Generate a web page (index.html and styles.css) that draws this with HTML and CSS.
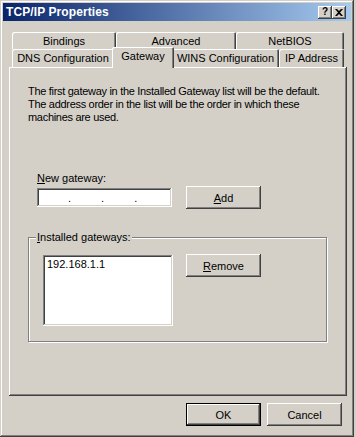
FILE: index.html
```html
<!DOCTYPE html>
<html lang="en">
<head>
    <link rel="stylesheet" href="styles.css">
    <meta charset="UTF-8">
    <title>TCP/IP Properties</title>
</head>
<body>
    <div class="window">
        <div class="titlebar">
            <span class="title">TCP/IP Properties</span>
            <div class="caption-buttons">
                <button class="cap-btn help">?</button>
                <button class="cap-btn close">
                    <svg width="8" height="7" viewBox="0 0 8 7"><path d="M0 0h2l2 2 2-2h2L5 3.5 8 7H6L4 5 2 7H0l3-3.5z" fill="#000"/></svg>
                </button>
            </div>
        </div>

        <div class="content">
            <div class="tabs">
                <div class="tab-row back">
                    <div class="tab t-bindings">Bindings</div>
                    <div class="tab t-advanced">Advanced</div>
                    <div class="tab t-netbios">NetBIOS</div>
                </div>
                <div class="tab-row front">
                    <div class="tab t-dns">DNS Configuration</div>
                    <div class="tab t-gateway selected">Gateway</div>
                    <div class="tab t-wins">WINS Configuration</div>
                    <div class="tab t-ip">IP Address</div>
                </div>
            </div>

            <div class="panel">
                <p class="intro">The first gateway in the Installed Gateway list will be the default. The address order in the list will be the order in which these machines are used.</p>

                <label class="field-label"><u>N</u>ew gateway:</label>
                <div class="input-row">
                    <div class="ip-input">
                        <span class="dot">.</span>
                        <span class="dot">.</span>
                        <span class="dot">.</span>
                    </div>
                    <button class="btn"><u>A</u>dd</button>
                </div>

                <fieldset class="group">
                    <legend><u>I</u>nstalled gateways:</legend>
                    <div class="list-row">
                        <div class="listbox">
                            <div class="item">192.168.1.1</div>
                        </div>
                        <button class="btn"><u>R</u>emove</button>
                    </div>
                </fieldset>
            </div>

            <div class="footer">
                <button class="btn default">OK</button>
                <button class="btn">Cancel</button>
            </div>
        </div>
    </div>
</body>
</html>
```

FILE: styles.css
```css
* {
    margin: 0;
    padding: 0;
    box-sizing: border-box;
    font-family: 'Liberation Sans', Arial, sans-serif;
}

body {
    background: #d4d0c8;
    color: #000;
    font-size: 11px;
}

.window {
    width: 354px;
    height: 437px;
    padding: 3px;
    background: #d4d0c8;
    box-shadow: inset -1px -1px #404040, inset 1px 1px #d4d0c8, inset -2px -2px #808080, inset 2px 2px #fff;
}

.titlebar {
    height: 18px;
    display: flex;
    align-items: center;
    justify-content: space-between;
    padding: 0 5px 0 3px;
    background: linear-gradient(to right, #0a246a, #a6caf0);
}

.title {
    color: #fff;
    font-weight: bold;
    font-size: 12px;
    letter-spacing: 0.1px;
}

.caption-buttons {
    display: flex;
}

.cap-btn {
    width: 14px;
    height: 13px;
    border: none;
    background: #d4d0c8;
    font-weight: bold;
    font-size: 10px;
    line-height: 12px;
    display: flex;
    align-items: center;
    justify-content: center;
    box-shadow: inset -1px -1px #404040, inset 1px 1px #fff, inset -2px -2px #808080;
}

.content {
    padding: 11px 4px 0 6px;
}

/* tabs */
.tab-row {
    display: flex;
    padding-left: 3px;
}

.tab {
    display: flex;
    align-items: center;
    justify-content: center;
    background: #d4d0c8;
    border-radius: 2px 2px 0 0;
    box-shadow: inset 1px 1px #fff, inset -1px 0 #404040, inset -2px 0 #808080;
    white-space: nowrap;
}

.back .tab {
    height: 17px;
}

.front {
    height: 18px;
    align-items: flex-end;
}

.front .tab {
    height: 18px;
    padding-bottom: 1px;
}

.front .tab.selected {
    height: 21px;
    margin: 0 -2px -1px;
    padding-bottom: 3px;
    position: relative;
    z-index: 2;
}

.t-bindings { width: 104px; }
.t-advanced { width: 120px; }
.t-netbios { width: 108px; }
.t-dns { width: 102px; }
.t-gateway { width: 62px; }
.t-wins { width: 107px; }
.t-ip { width: 65px; }

/* panel */
.panel {
    width: 338px;
    height: 329px;
    padding: 18px 0 0 19px;
    box-shadow: inset -1px -1px #404040, inset 1px 1px #fff, inset -2px -2px #808080;
}

.intro {
    width: 306px;
    line-height: 13px;
    letter-spacing: -0.3px;
}

.field-label {
    display: block;
    margin: 48px 0 1px 9px;
    line-height: 13px;
}

.input-row {
    display: flex;
    align-items: center;
    gap: 14px;
    margin-left: 9px;
}

.ip-input {
    width: 135px;
    height: 19px;
    background: #fff;
    display: flex;
    align-items: center;
    gap: 30px;
    padding-left: 31px;
    box-shadow: inset -1px -1px #fff, inset 1px 1px #808080, inset -2px -2px #d4d0c8, inset 2px 2px #404040;
}

.btn {
    width: 75px;
    height: 23px;
    border: none;
    background: #d4d0c8;
    font-size: 11px;
    color: #000;
    box-shadow: inset -1px -1px #404040, inset 1px 1px #fff, inset -2px -2px #808080;
}

.btn.default {
    border: 1px solid #000;
}

/* group box */
.group {
    width: 299px;
    margin-top: 22px;
    padding: 0 0 15px 14px;
    border: 1px solid #808080;
    box-shadow: 1px 1px #fff, inset 1px 1px #fff;
}

.group legend {
    margin-left: -7px;
    padding: 0 1px;
    line-height: 13px;
    background: #d4d0c8;
}

.list-row {
    display: flex;
    align-items: flex-start;
    gap: 13px;
    margin-top: 10px;
}

.listbox {
    width: 130px;
    height: 71px;
    margin-top: 1px;
    background: #fff;
    padding: 3px 4px;
    box-shadow: inset -1px -1px #fff, inset 1px 1px #808080, inset -2px -2px #d4d0c8, inset 2px 2px #404040;
}

.item {
    line-height: 13px;
}

.footer {
    display: flex;
    justify-content: flex-end;
    gap: 6px;
    padding: 7px 5px 0 0;
}
```
